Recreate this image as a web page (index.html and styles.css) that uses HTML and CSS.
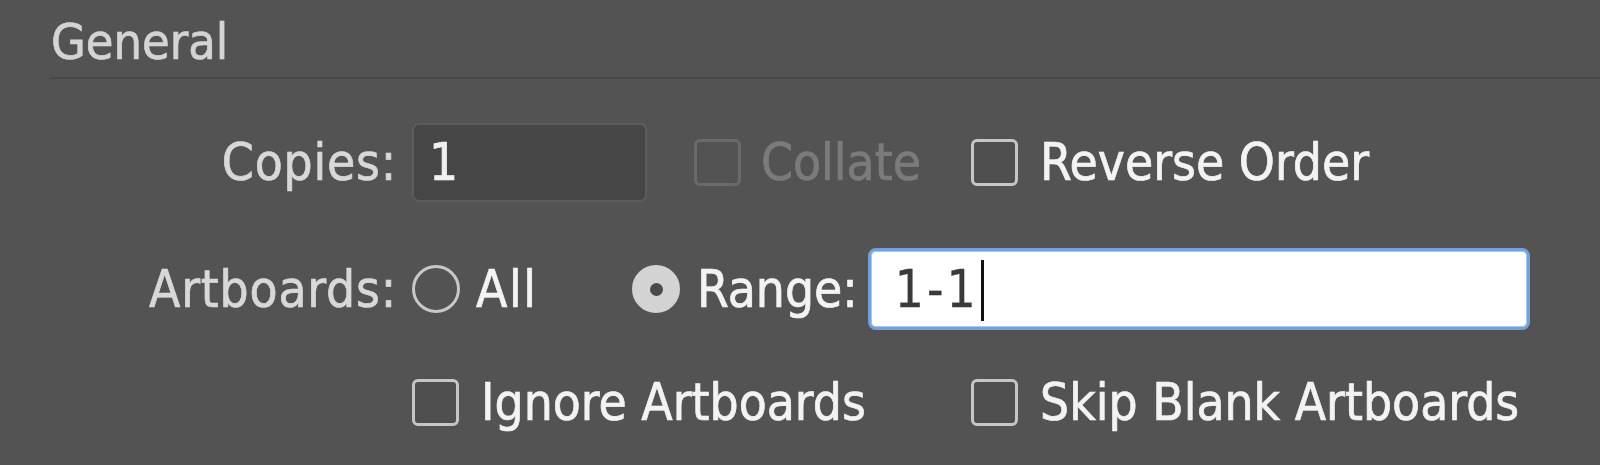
FILE: index.html
```html
<!DOCTYPE html>
<html lang="en">
<head>
<meta charset="utf-8">
<title>General</title>
<link rel="stylesheet" href="styles.css">
</head>
<body>
<div class="panel">
  <div class="section-head">General</div>
  <div class="form">
    <div class="row row-copies">
      <div class="label">Copies:</div>
      <div class="controls">
        <div class="group">
          <div class="input-dark">1</div>
          <div class="option disabled"><span class="checkbox"></span><span class="opt-text">Collate</span></div>
        </div>
        <div class="option"><span class="checkbox"></span><span class="opt-text">Reverse Order</span></div>
      </div>
    </div>
    <div class="row row-artboards">
      <div class="label">Artboards:</div>
      <div class="controls">
        <div class="option radio-all"><span class="radio"></span><span class="opt-text">All</span></div>
        <div class="option radio-range"><span class="radio checked"></span><span class="opt-text">Range:</span></div>
        <div class="input-light"><span class="value">1-1</span><span class="caret"></span></div>
      </div>
    </div>
    <div class="row row-ignore">
      <div class="label"></div>
      <div class="controls">
        <div class="group">
          <div class="option"><span class="checkbox"></span><span class="opt-text">Ignore Artboards</span></div>
        </div>
        <div class="option"><span class="checkbox"></span><span class="opt-text">Skip Blank Artboards</span></div>
      </div>
    </div>
  </div>
</div>
</body>
</html>
```

FILE: styles.css
```css
html, body {
  margin: 0;
  padding: 0;
  background: #535353;
  width: 1600px;
  height: 465px;
  overflow: hidden;
}

.panel {
  font-family: "DejaVu Sans", "Noto Sans", sans-serif;
  font-stretch: condensed;
  font-size: 51px;
  color: #f3f3f3;
  height: 465px;
  box-sizing: border-box;
  -webkit-text-stroke: 0.7px currentColor;
}

.section-head {
  margin-top: 17px;
  margin-left: 50px;
  padding-left: 1px;
  padding-bottom: 10px;
  line-height: 50px;
  font-size: 50px;
  color: #d4d4d4;
  border-bottom: 2px solid #494949;
}

.form {
  display: flex;
  flex-direction: column;
}

.row {
  display: grid;
  grid-template-columns: 397px 1fr;
  column-gap: 15px;
  align-items: center;
  height: 80px;
}

.row-copies { margin-top: 43px; }
.row-artboards { margin-top: 46px; height: 82px; }
.row-ignore { margin-top: 32px; }

.label {
  text-align: right;
  color: #d8d8d8;
  line-height: 1;
  letter-spacing: 0.8px;
}

.controls {
  display: flex;
  align-items: center;
  height: 100%;
}

.group {
  display: flex;
  align-items: center;
  width: 559px;
  flex: none;
}

.input-dark {
  width: 235px;
  height: 79px;
  box-sizing: border-box;
  border: 2px solid #5c5c5c;
  background: #464646;
  border-radius: 7px;
  padding-left: 15px;
  line-height: 75px;
  color: #f0f0f0;
  margin-right: 47px;
  flex: none;
}

.option {
  display: flex;
  align-items: center;
  line-height: 1;
}

.checkbox {
  width: 47px;
  height: 47px;
  box-sizing: border-box;
  border: 3px solid #c6c6c6;
  border-radius: 6px;
  background: #4f4f4f;
  margin-right: 22px;
  flex: none;
}

.option.disabled .checkbox {
  border-color: #6a6a6a;
  background: transparent;
  margin-right: 20px;
}

.option.disabled .opt-text {
  color: #7b7b7b;
}

.radio {
  width: 48px;
  height: 48px;
  box-sizing: border-box;
  border: 3px solid #c8c8c8;
  border-radius: 50%;
  margin-right: 16px;
  flex: none;
  display: flex;
  align-items: center;
  justify-content: center;
}

.radio-all .opt-text {
  letter-spacing: 1.5px;
}

.radio.checked {
  background: #d3d3d3;
  border-color: #d3d3d3;
  margin-right: 17px;
}

.radio.checked::after {
  content: "";
  width: 13px;
  height: 13px;
  border-radius: 50%;
  background: #4a4a4a;
}

.radio-all { width: 220px; flex: none; }

.radio-range { margin-right: 10px; }

.input-light {
  width: 662px;
  height: 82px;
  box-sizing: border-box;
  border: 3px solid #74a1dc;
  border-radius: 8px;
  background: #ffffff;
  box-shadow: inset 0 0 0 1px #a9c6ec;
  display: flex;
  align-items: center;
  padding-left: 24px;
  color: #3a3a3a;
  flex: none;
  -webkit-text-stroke: 0.3px currentColor;
}

.value {
  line-height: 1;
  letter-spacing: 3px;
}

.caret {
  display: inline-block;
  width: 3px;
  height: 61px;
  background: #111111;
  margin-left: 2px;
  margin-top: 2px;
}
```
